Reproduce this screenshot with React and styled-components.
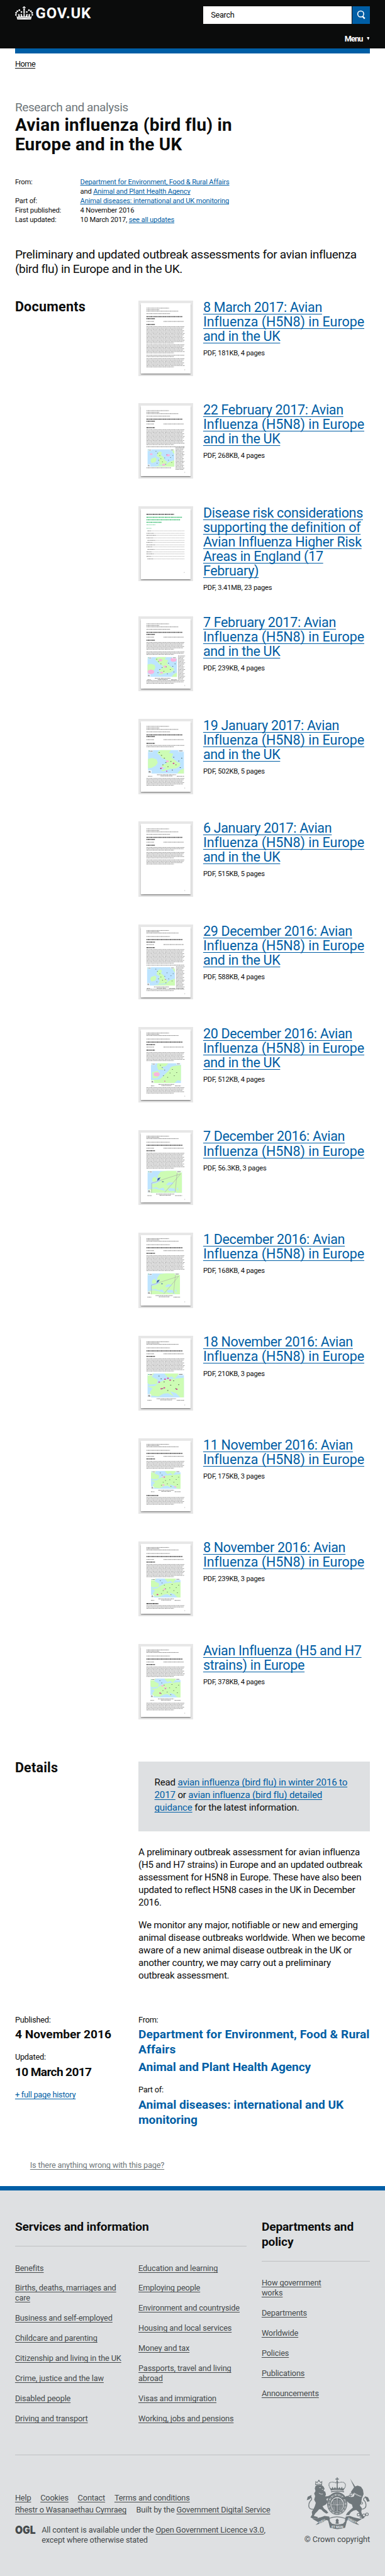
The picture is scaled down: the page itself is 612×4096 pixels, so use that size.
import React from 'react';
import styled, { createGlobalStyle, css } from 'styled-components';

/* The root font size makes 1rem equal to ten design pixels. */
const GlobalStyle = createGlobalStyle`
  html { font-size: 7.9735px; background: #dee0e2; }
  body { margin: 0; font-family: Roboto, "Liberation Sans", sans-serif; color: #0b0c0c; background: #fff; }
  *, *::before, *::after { box-sizing: border-box; }
  h1, h2, h3, p, ul, dl, dt, dd { margin: 0; padding: 0; font-weight: 400; }
  ul { list-style: none; }
`;

const blue = '#005ea5';

const gutter = css`
  padding-left: 3rem;
  padding-right: 3rem;
`;

const Link = styled.a`
  color: ${(p) => p.$color || blue};
  text-decoration: underline;
  text-decoration-thickness: 1px;
  text-decoration-skip-ink: none;
  text-underline-offset: 0.13em;
  white-space: nowrap;
`;

const PlainLink = styled(Link)`
  text-decoration: none;
`;

/* ---------- header ---------- */

const Header = styled.header`
  ${gutter}
  height: 9.7rem;
  background: #0b0c0c;
  color: #fff;
`;

const HeaderBar = styled.div`
  display: flex;
  justify-content: space-between;
  align-items: flex-start;
  padding-top: 1.2rem;
`;

const Brand = styled.a`
  display: flex;
  align-items: flex-start;
  gap: 0.5rem;
  color: #fff;
  font-size: 3rem;
  font-weight: 700;
  line-height: 2.8rem;
  letter-spacing: 0.105rem;
`;

const CrownMark = styled.svg`
  width: 3.6rem;
  height: 2.7rem;
`;

const SearchForm = styled.div`
  display: flex;
  gap: 0.1rem;
  height: 3.6rem;
`;

const SearchField = styled.div`
  width: 29.6rem;
  padding-left: 1.5rem;
  background: #fff;
  color: #0b0c0c;
  font-size: 1.6rem;
  line-height: 3.6rem;
  letter-spacing: -0.043rem;
`;

const SearchButton = styled.button`
  display: flex;
  align-items: center;
  justify-content: center;
  width: 3.5rem;
  padding: 0;
  border: 0;
  background: ${blue};
  svg { width: 2rem; height: 2.4rem; }
`;

const MenuToggle = styled.div`
  display: flex;
  justify-content: flex-end;
  align-items: center;
  gap: 0.75rem;
  padding-top: 1.95rem;
  padding-right: 0.1rem;
  font-size: 1.6rem;
  font-weight: 700;
  line-height: 2rem;
  letter-spacing: -0.11rem;
  svg { width: 0.6rem; height: 0.6rem; }
`;

/* ---------- page ---------- */

const Main = styled.main`
  ${gutter}
`;

const AccentBar = styled.div`
  height: 1rem;
  background: ${blue};
`;

const Breadcrumb = styled.nav`
  padding-top: 1.05rem;
  font-size: 1.6rem;
  line-height: 2rem;
  letter-spacing: -0.065rem;
`;

const Context = styled.p`
  margin-top: 6.15rem;
  color: #6f777b;
  font-size: 2.4rem;
  line-height: 3rem;
  letter-spacing: -0.06rem;
`;

const Title = styled.h1`
  margin-top: 0.1rem;
  font-size: 3.5rem;
  font-weight: 700;
  line-height: 3.9rem;
  letter-spacing: 0.031rem;
`;

const Metadata = styled.dl`
  display: grid;
  grid-template-columns: 13rem 1fr;
  margin-top: 4.55rem;
  font-size: 1.4rem;
  line-height: 1.9rem;
  letter-spacing: -0.02rem;
`;

const Lead = styled.p`
  margin-top: 4.38rem;
  font-size: 2.4rem;
  line-height: 3rem;
  letter-spacing: -0.045rem;
`;

const Section = styled.section`
  display: grid;
  grid-template-columns: 24.6rem 1fr;
  margin-top: ${(p) => p.$top}rem;
`;

const SectionTitle = styled.h2`
  font-size: 2.7rem;
  font-weight: 700;
  line-height: 2.5rem;
  letter-spacing: 0.028rem;
`;

const DocumentRow = styled.article`
  display: flex;
  align-items: flex-start;
  gap: 2rem;
  min-height: 20.5rem;
`;

const ThumbnailFrame = styled.div`
  flex: none;
  width: 10.9rem;
  height: 15rem;
  padding: 0.5rem;
  background: #e7e7e7;
`;

const ThumbnailPage = styled.svg`
  display: block;
  width: 9.9rem;
  height: 14rem;
  background: #fff;
  box-shadow: 0 0.2rem 0.2rem rgba(0, 0, 0, 0.4);
`;

const DocumentText = styled.div`
  padding-bottom: 4.58rem;
`;

const DocumentTitle = styled.h3`
  margin-top: -0.17rem;
  font-size: 2.7rem;
  line-height: 2.9rem;
`;

const TitleLine = styled.span`
  letter-spacing: ${(p) => (p.$wide ? -0.007 : -0.04)}rem;
`;

const FileInfo = styled.p`
  margin-top: 0.99rem;
  font-size: 1.4rem;
  line-height: 2rem;
  letter-spacing: -0.022rem;
`;

const Body = styled.div`
  font-size: 1.9rem;
  line-height: 2.5rem;
  letter-spacing: -0.03rem;
  white-space: nowrap;
  p + p { margin-top: 2rem; }
`;

const CallToAction = styled.div`
  height: 13.9rem;
  margin-bottom: 3rem;
  padding: 3rem 3.2rem;
  background: #dee0e2;
  letter-spacing: -0.023rem;
`;

const Fact = styled.div`
  & + & { margin-top: 2.07rem; }
`;

const FactLabel = styled.p`
  font-size: 1.6rem;
  line-height: 2rem;
  letter-spacing: -0.03rem;
`;

const FactValue = styled.p`
  margin-top: ${(p) => (p.$next ? 0.5 : 0.43)}rem;
  font-size: 2.4rem;
  font-weight: 700;
  line-height: 3rem;
  letter-spacing: ${(p) => p.$ls || 0}rem;
  white-space: nowrap;
`;

const HistoryLink = styled.p`
  margin-top: 2.07rem;
  font-size: 1.6rem;
  line-height: 2rem;
  letter-spacing: -0.03rem;
`;

const Feedback = styled.div`
  padding: 6.57rem 3rem 3.15rem;
  font-size: 1.6rem;
  line-height: 2rem;
  letter-spacing: -0.023rem;
`;

/* ---------- footer ---------- */

const Footer = styled.footer`
  ${gutter}
  min-height: 77.7rem;
  border-top: 1rem solid ${blue};
  background: #dee0e2;
  color: #454a4c;
  font-size: 1.6rem;
  line-height: 2rem;
  letter-spacing: -0.019rem;
`;

const FooterNav = styled.div`
  display: flex;
  justify-content: space-between;
  padding-top: 5.78rem;
`;

const FooterGroup = styled.div`
  width: ${(p) => p.$width}rem;
`;

const FooterHeading = styled.h2`
  padding-bottom: 2.22rem;
  border-bottom: 1px solid #bfc1c3;
  color: #0b0c0c;
  font-size: 2.4rem;
  font-weight: 700;
  line-height: 3rem;
  letter-spacing: -0.016rem;
`;

const FooterColumns = styled.div`
  display: grid;
  grid-template-columns: 24.6rem 1fr;
  padding-top: 3.37rem;
`;

const FooterList = styled.ul`
  display: flex;
  flex-direction: column;
  gap: 2rem;
`;

const FooterMeta = styled.div`
  display: flex;
  justify-content: space-between;
  margin-top: 6.15rem;
  border-top: 1px solid #bfc1c3;
`;

const MetaLinks = styled.div`
  padding-top: 7.57rem;
`;

const MetaRow = styled.div`
  display: flex;
  gap: ${(p) => p.$gap}rem;
  margin-bottom: 0.4rem;
  white-space: nowrap;
`;

const Licence = styled.div`
  display: flex;
  gap: 1.2rem;
  margin-top: 2rem;
  white-space: nowrap;
`;

const OglLogo = styled.svg`
  width: 4.1rem;
  height: 2rem;
  overflow: visible;
`;

const Copyright = styled.div`
  display: flex;
  flex-direction: column;
  align-items: flex-end;
  padding-top: 4.4rem;
  letter-spacing: -0.009rem;
  svg { width: 12.7rem; height: 10.4rem; margin-bottom: 1.05rem; }
`;

/* ---------- drawings ---------- */

const dotRing = [[35, 32], [23, 22], [12, 28], [5, 37], [4, 48], [65, 32], [77, 22], [88, 28], [95, 37], [96, 48]];

function Crown() {
  return (
    <CrownMark viewBox="0 0 100 76" fill="#fff">
      {dotRing.map(([x, y], i) => <circle key={i} cx={x} cy={y} r="4.8" />)}
      <circle cx="50" cy="20" r="5" />
      <path d="M46.500 0h7l-1.500 6 6-1.500v7l-6-1.500v8h-4v-8l-6 1.500v-7l6 1.500z" />
      <path d="M46 26h8v12h-8z" />
      <path d="M12 76 L7 54 l10 7 1-16 6 0 2 14 8-5 -3-9h7l1 9 7 5 1-16h6l1 16 7-5 1-9h7l-3 9 8 5 2-14h6l1 16 10-7-5 22z" />
      <path d="M14 67q36-6 72 0" stroke="#0b0c0c" strokeWidth="2" fill="none" />
      <path d="M29 46h9M29 50h9M62 46h9M62 50h9M45 42h10M15 46h9M76 46h9" stroke="#fff" strokeWidth="3" />
    </CrownMark>
  );
}

const dashes = ['3 .7 1.800 .6 2.400 .5', '2.200 .6 3.400 .5 1.400 .6', '4 .6 2 .6 2.600 .5 1.200 .7'];

function TextLines({ from, to, step = 2.7, x1 = 11, x2 = 87 }) {
  const count = Math.round((to - from) / step) + 1;
  return Array.from({ length: count }, (_, i) => {
    const last = i === count - 1 && x1 < 20;
    const end = last ? x1 + (x2 - x1) * 0.72 : x2 - ((i * 7) % 5);
    return (
      <line key={i} x1={x1} x2={end} y1={from + i * step} y2={from + i * step}
        stroke="#222" strokeWidth="1" strokeOpacity=".62" strokeDasharray={dashes[i % 3]} />
    );
  });
}

function Stroke({ y, x1 = 11, x2, bold, color = '#222' }) {
  return (
    <line x1={x1} x2={x2} y1={y} y2={y} stroke={color} strokeWidth={bold ? 1.9 : 1}
      strokeOpacity={bold ? 0.8 : 0.65} strokeDasharray={dashes[Math.round(y) % 3]} />
  );
}

const sea = '#bde4ff';
const land = '#cdfcb4';

const shores = {
  uk: [
    'M36 0H64L58 12 70 16 66 32 76 45 82 52 90 56 88 68 78 78 62 80 42 90 36 88 50 76 40 72 38 64 50 58 52 44 46 38 40 36 34 24 26 14 30 4Z',
    'M0 38 12 34 24 40 27 54 22 66 10 76 0 78Z',
    'M82 98 90 84 100 78V100H82Z',
  ],
  isles: [
    'M38 20 46 12 54 20 50 32 60 46 64 62 74 72 68 86 40 92 46 78 42 62 46 50 34 38Z',
    'M14 54 28 46 34 56 30 72 16 78 12 66Z',
    'M20 100 40 95 66 92 78 74 92 66 100 62V100Z',
    'M88 0H100V30L94 18Z',
  ],
  north: [
    'M22 0H58L50 14 34 20 46 32 24 34 20 16Z',
    'M4 46 22 38 30 54 22 74 6 76Z',
    'M0 84 28 82 36 72 46 56 60 36 66 20 76 14 100 10V88L88 86 78 100H0Z',
  ],
  europe: [
    'M30 22 38 4 58 0H100V100H84L78 80 66 78 58 84 66 96 50 88 46 76 34 82 26 74 14 78 12 60 26 56 40 44 30 36Z',
    'M14 34 22 26 28 40 24 50 14 48Z',
    'M4 84 20 80 52 92 80 92V100H4Z',
  ],
  central: [
    'M0 0 18 0 12 14 28 26 26 44 6 46 0 40Z',
    'M46 0H88L80 12 74 22 66 12 56 18Z',
    'M0 54 20 52 32 38 48 26 60 24 100 18V100H90L78 82 62 74 72 96 56 82 44 84 30 96 10 92 6 80 14 62Z',
  ],
};

const marks = [[30, 10], [36, 22], [44, 34], [70, 30], [62, 48], [76, 62], [54, 70], [40, 62], [84, 46], [88, 74], [66, 84], [48, 52], [34, 78], [92, 34]];

function MapFigure({ x, y, w, h, kind, hot = [], soft, busy, caption = true }) {
  return (
    <>
      <svg x={x} y={y} width={w} height={h} viewBox="0 0 100 100" preserveAspectRatio="none">
        <rect width="100" height="100" fill={sea} />
        {shores[kind].map((d) => <path key={d} d={d} fill={land} />)}
        {kind === 'europe' && <path d="M54 62 62 52 76 54 72 62 58 66ZM84 80 90 92 88 76Z" fill={sea} />}
        {soft && <path d="M12 100V56L96 14M96 14 50 98M86 6 80 96" stroke="#9b88a0" strokeWidth="1" fill="none" />}
        {hot.map(([a, b, r = 5], i) => <circle key={i} cx={a} cy={b} r={r} fill={r > 3 ? '#f9b4de' : '#d8369c'} />)}
        {soft && <path d="M30 34 38 30 34 40 28 46ZM42 48h5v3h-5z" fill="#3a5aa8" />}
        {!soft && marks.slice(0, busy ? 14 : 9).map(([a, b], i) => <rect key={i} x={a} y={b} width="3" height="2" fill="#2d3a2c" />)}
        <path d="M0 0H14V9H0ZM84 0H100V8H84ZM0 86H10V100H0Z" fill="#fff" fillOpacity=".9" />
        <path d="M2 3h3v3H2z" fill="#29a58a" />
        <path d="M6 5h7M86 4h10M2 91h5M2 95h6" stroke="#333" strokeWidth="1.400" />
      </svg>
      {caption && (
        <>
          <Stroke y={y + h + 2.5} x1={x + w * 0.25} x2={x + w * 0.78} />
          <Stroke y={y + h + 5} x1={x + w * 0.35} x2={x + w * 0.68} />
          <Stroke y={y + h + 5.5} x1={x} x2={x + w * 0.12} />
          <Stroke y={y + h + 5.5} x1={x + w * 0.8} x2={x + w} />
        </>
      )}
    </>
  );
}

function PageHead({ lines, sub, title, date, report }) {
  return (
    <>
      <Stroke y={lines[0]} x2={56} />
      <Stroke y={lines[1]} x2={37} />
      <Stroke y={lines[2]} x2={75} />
      <Stroke y={sub} x2={58} />
      <Stroke y={title[0]} x2={83} bold />
      {title[1] && <Stroke y={title[1]} x2={28} bold />}
      <Stroke y={date} x2={26} />
      <Stroke y={date} x1={45} x2={85} />
      <Stroke y={report} x2={28} bold />
      <Stroke y={133} x1={87} x2={88} />
    </>
  );
}

const headA = { lines: [10, 13.3, 16], sub: 21, title: [27, 31], date: 36.5, report: 42.5 };
const headB = { lines: [7, 9.5, 12], sub: 19, title: [25, 30], date: 35, report: 41 };
const headC = { lines: [7, 9.5, 12], sub: 19, title: [25], date: 31, report: 36 };

const thumbnails = {
  march: (
    <><PageHead {...headA} /><TextLines from={47} to={79} /><TextLines from={83} to={100} /><TextLines from={104} to={107} /><TextLines from={111} to={127} /></>
  ),
  feb22: (
    <><PageHead {...headA} report={44} /><TextLines from={48} to={78} /><Stroke y={82} x2={87} /><MapFigure x={13} y={87} w={54} h={35} kind="isles" busy hot={[[76, 34, 7], [14, 28], [60, 88, 6]]} caption={false} /><Stroke y={124} x2={60} /><TextLines from={84} to={128} x1={69} x2={87} /></>
  ),
  risk: (
    <>
      <Stroke y={11} x2={66} bold />
      <Stroke y={17} x2={82} bold color="#1ab25a" /><Stroke y={22} x2={78} bold color="#1ab25a" /><Stroke y={27} x2={41} bold color="#1ab25a" />
      <Stroke y={32} x2={29} color="#1ab25a" /><Stroke y={39} x2={21} color="#1ab25a" />
      {[44, 49, 53, 58, 63, 67, 72, 76, 81, 86, 90, 95, 100].map((y, i) => (
        <g key={y}>
          <Stroke y={y} x1={i % 4 === 0 ? 13 : 11} x2={20 + ((i * 5) % 11)} />
          <line x1={20 + ((i * 5) % 11)} x2="87" y1={y} y2={y} stroke="#444" strokeOpacity=".6" strokeWidth=".7" strokeDasharray=".8 .3" />
        </g>
      ))}
      <Stroke y={127} x1={86} x2={87} />
    </>
  ),
  feb7: (
    <><PageHead {...headA} /><TextLines from={47} to={60} /><TextLines from={66} to={71} step={2.5} /><MapFigure x={13} y={76} w={59} h={40} kind="uk" busy hot={[[12, 74, 11], [88, 14, 10], [44, 16, 6], [60, 48], [48, 78]]} /><TextLines from={74} to={120} x1={74} x2={88} /><TextLines from={123} to={129} /></>
  ),
  jan19: (
    <><PageHead {...headA} title={[27, 30.5]} report={44} /><TextLines from={48} to={51} /><MapFigure x={14} y={57} w={72} h={47} kind="uk" busy hot={[[54, 48, 4], [38, 76, 4], [71, 57, 2.5], [36, 78, 2], [52, 90, 2]]} /><TextLines from={114} to={128} /></>
  ),
  jan6: (
    <><PageHead {...headA} /><TextLines from={47} to={52} /><TextLines from={57} to={68} /><TextLines from={72} to={80} /></>
  ),
  dec29: (
    <><PageHead {...headB} /><TextLines from={45} to={72} /><Stroke y={76} x2={86} /><MapFigure x={12} y={80} w={56} h={37} kind="isles" busy hot={[[66, 66, 2]]} /><TextLines from={79} to={121} x1={70} x2={87} /><TextLines from={124} to={127} /></>
  ),
  dec20: (
    <><PageHead {...headB} /><TextLines from={46} to={62} /><MapFigure x={20} y={67} w={60} h={40} kind="north" hot={[[19, 56, 10], [46, 90, 2]]} /><TextLines from={116} to={127} /></>
  ),
  dec7: (
    <><PageHead {...headC} /><TextLines from={41} to={70} /><MapFigure x={13} y={76} w={69} h={44} kind="europe" soft /></>
  ),
  dec1: (
    <><PageHead {...headC} /><TextLines from={41} to={71} /><MapFigure x={13} y={76} w={65} h={42} kind="europe" soft /></>
  ),
  nov18: (
    <><PageHead {...headC} /><TextLines from={41} to={65} /><MapFigure x={13} y={70} w={73} h={48} kind="central" hot={[[32, 36, 2.5], [48, 24, 2.5], [56, 20, 2.5], [38, 64, 2.5], [46, 60, 2.5], [62, 28, 2.5], [80, 66, 2.5]]} /></>
  ),
  nov11: (
    <><PageHead {...headC} /><TextLines from={41} to={55} /><MapFigure x={20} y={60} w={59} h={36} kind="central" busy hot={[[44, 34, 5], [42, 78, 4], [82, 88, 4]]} /><Stroke y={109} x2={35} bold /><TextLines from={113} to={127} /></>
  ),
  nov8: (
    <><PageHead {...headC} /><TextLines from={41} to={65} /><MapFigure x={20} y={69} w={59} h={38} kind="central" busy hot={[[46, 56, 4], [22, 84, 3]]} /><Stroke y={119} x2={35} bold /><TextLines from={123} to={129} /></>
  ),
  strains: (
    <><PageHead {...headC} /><TextLines from={41} to={60} /><MapFigure x={19} y={64} w={60} h={38} kind="central" busy hot={[[40, 38, 4], [50, 50, 4], [32, 76, 3]]} /><TextLines from={113} to={127} /></>
  ),
};

function RoyalArms() {
  return (
    <svg viewBox="20 16 378 310" fill="#6f777b">
      {/* crown */}
      <g stroke="#6f777b" fill="none" strokeWidth="5">
        <path d="M168 92Q146 62 158 50T202 52Q236 38 248 52T238 92" strokeDasharray="6 3" />
        <path d="M203 40V92" strokeWidth="6" />
      </g>
      <path d="M199 18h8l-2 7 7-2v8l-7-2v10h-5V29l-7 2v-8l7 2z" />
      <circle cx="203" cy="44" r="6" />
      <path d="M166 96 161 80l9 4 5-12 7 12 8-10 6 10 7-14 7 14 6-10 8 10 7-12 5 12 9-4-5 16q-40-10-79 0z" />
      <path d="M166 100q38-10 78 0v6q-40-10-78 0z" />
      {/* garter and shield */}
      <path fillRule="evenodd" d="M203 104a60 68 0 1 1-.1 0zM203 134a40 44 0 1 0 .1 0z" />
      <ellipse cx="203" cy="180" rx="36" ry="41" />
      <path d="M203 139v82M167 180h72" stroke="#dee0e2" strokeWidth="3" />
      <path d="M174 156h22M176 164h20M176 171h20M212 156h20M212 164h22M212 171h22M174 190v18M181 190v22M188 190v24M212 192h22M212 200h20M212 208h14" stroke="#dee0e2" strokeWidth="2.500" strokeDasharray="7 2 4 2" />
      <ellipse cx="203" cy="176" rx="50" ry="56" fill="none" stroke="#dee0e2" strokeWidth="11" strokeDasharray="3 4 2 5 5 3" opacity=".85" />
      {/* lion */}
      <path d="M74 68 82 62 110 62 122 72 128 84 122 96 132 102 136 118 132 130 150 128 160 122 158 136 138 146 146 162 138 176 128 182 116 188 124 202 142 216 150 228 138 232 122 222 108 208 96 206 84 220 72 232 64 246 88 252 84 262 58 262 44 254 54 238 52 222 62 206 70 188 76 168 66 150 72 128 66 112 74 98 70 82Z" />
      <path d="M74 60 76 42 84 48 94 34 104 48 112 42 111 60Q92 54 74 60Z" fill="none" stroke="#6f777b" strokeWidth="4" />
      <circle cx="94" cy="36" r="4" />
      <path d="M64 206Q34 208 34 186T50 150Q56 132 36 134" fill="none" stroke="#6f777b" strokeWidth="5" />
      <path d="M22 152 28 132 50 122 48 138 36 148Z" />
      <path d="M96 78h10M112 88h8M94 110q14 10 24 6" stroke="#dee0e2" strokeWidth="3" fill="none" />
      {/* unicorn */}
      <path d="M280 24 312 74 304 78Z" />
      <path d="M306 72 324 66 344 72 356 90 360 116 350 140 346 164 338 184 350 200 346 222 352 240 366 256 352 264 340 244 330 222 316 210 300 214 284 224 274 240 254 242 262 228 276 214 296 196 290 178 274 170 250 148 234 146 232 136 252 132 262 126 282 134 300 132 308 116 290 112 284 104 296 86Z" />
      <path d="M302 110 328 124 346 130" stroke="#dee0e2" strokeWidth="6" fill="none" strokeDasharray="6 3" />
      <path d="M350 206Q376 202 374 180T360 152Q356 134 380 136" fill="none" stroke="#6f777b" strokeWidth="5" />
      <path d="M366 128 386 136 396 158 382 162 374 146Z" />
      <g fill="none" stroke="#6f777b" strokeWidth="4">
        <circle cx="286" cy="118" r="7" /><circle cx="276" cy="130" r="6" /><circle cx="348" cy="170" r="6" /><circle cx="330" cy="238" r="8" />
        <circle cx="362" cy="242" r="8" /><circle cx="380" cy="236" r="8" /><circle cx="346" cy="252" r="7" />
      </g>
      {/* motto scroll */}
      <path d="M56 264Q84 262 128 246L156 250 160 276 138 270Q112 290 74 300L92 284Z" />
      <path d="M350 264Q322 262 278 246L254 250 248 276 270 270Q296 290 334 300L316 284Z" />
      <path d="M146 262 172 292Q204 302 238 292L264 262 250 316Q204 332 160 316Z" />
      <path d="M203 262q14 8 6 20l6 8-12 4-12-4 6-8q-8-12 6-20z" />
      <path d="M152 262Q200 240 254 262" fill="none" stroke="#6f777b" strokeWidth="4" />
      <g fill="#dee0e2" fontSize="19" fontWeight="700" textAnchor="middle" letterSpacing="0">
        <text transform="translate(116 284) rotate(-27)">DIEU</text>
        <text x="204" y="318">ET MON</text>
        <text transform="translate(288 280) rotate(27)">DROIT</text>
      </g>
    </svg>
  );
}

/* ---------- data ---------- */

const uk = ['Influenza (H5N8) in Europe', 'and in the UK'];
const europe = ['Influenza (H5N8) in Europe'];

const documents = [
  { art: 'march', lines: ['8 March 2017: Avian', ...uk], info: 'PDF, 181KB, 4 pages' },
  { art: 'feb22', lines: ['22 February 2017: Avian', ...uk], info: 'PDF, 268KB, 4 pages' },
  { art: 'risk', lines: ['Disease risk considerations', 'supporting the definition of', 'Avian Influenza Higher Risk', 'Areas in England (17', 'February)'], info: 'PDF, 3.41MB, 23 pages' },
  { art: 'feb7', lines: ['7 February 2017: Avian', ...uk], info: 'PDF, 239KB, 4 pages' },
  { art: 'jan19', lines: ['19 January 2017: Avian', ...uk], info: 'PDF, 502KB, 5 pages' },
  { art: 'jan6', lines: ['6 January 2017: Avian', ...uk], info: 'PDF, 515KB, 5 pages' },
  { art: 'dec29', lines: ['29 December 2016: Avian', ...uk], info: 'PDF, 588KB, 4 pages' },
  { art: 'dec20', lines: ['20 December 2016: Avian', ...uk], info: 'PDF, 512KB, 4 pages' },
  { art: 'dec7', lines: ['7 December 2016: Avian', ...europe], info: 'PDF, 56.3KB, 3 pages' },
  { art: 'dec1', lines: ['1 December 2016: Avian', ...europe], info: 'PDF, 168KB, 4 pages' },
  { art: 'nov18', lines: ['18 November 2016: Avian', ...europe], info: 'PDF, 210KB, 3 pages' },
  { art: 'nov11', lines: ['11 November 2016: Avian', ...europe], info: 'PDF, 175KB, 3 pages' },
  { art: 'nov8', lines: ['8 November 2016: Avian', ...europe], info: 'PDF, 239KB, 3 pages' },
  { art: 'strains', lines: ['Avian Influenza (H5 and H7', 'strains) in Europe'], info: 'PDF, 378KB, 4 pages' },
];

const services = [
  [['Benefits'], ['Births, deaths, marriages and', 'care'], ['Business and self-employed'], ['Childcare and parenting'], ['Citizenship and living in the UK'], ['Crime, justice and the law'], ['Disabled people'], ['Driving and transport']],
  [['Education and learning'], ['Employing people'], ['Environment and countryside'], ['Housing and local services'], ['Money and tax'], ['Passports, travel and living', 'abroad'], ['Visas and immigration'], ['Working, jobs and pensions']],
];
const departments = [['How government', 'works'], ['Departments'], ['Worldwide'], ['Policies'], ['Publications'], ['Announcements']];

const grey = '#454a4c';

function Lines({ lines }) {
  return lines.map((line, i) => (
    <React.Fragment key={line}>{i > 0 && <br />}{line}</React.Fragment>
  ));
}

function LinkList({ items }) {
  return (
    <FooterList>
      {items.map((lines) => (
        <li key={lines[0]}><Link $color={grey}><Lines lines={lines} /></Link></li>
      ))}
    </FooterList>
  );
}

function DocumentItem({ art, lines, info }) {
  return (
    <DocumentRow>
      <ThumbnailFrame><ThumbnailPage viewBox="0 0 99 140">{thumbnails[art]}</ThumbnailPage></ThumbnailFrame>
      <DocumentText>
        <DocumentTitle>
          <Link>
            {lines.map((line, i) => (
              <React.Fragment key={line}>
                {i > 0 && <br />}
                <TitleLine $wide={line.includes('H5N8')}>{line}</TitleLine>
              </React.Fragment>
            ))}
          </Link>
        </DocumentTitle>
        <FileInfo>{info}</FileInfo>
      </DocumentText>
    </DocumentRow>
  );
}

export default function App() {
  return (
    <>
      <GlobalStyle />
      <Header>
        <HeaderBar>
          <Brand><Crown />GOV.UK</Brand>
          <SearchForm>
            <SearchField>Search</SearchField>
            <SearchButton aria-label="Search">
              <svg viewBox="0 0 20 24" fill="none" stroke="#fff">
                <circle cx="9.300" cy="10.300" r="6" strokeWidth="2" />
                <path d="M13 15l4.300 4.600" strokeWidth="3" />
              </svg>
            </SearchButton>
          </SearchForm>
        </HeaderBar>
        <MenuToggle>
          Menu
          <svg viewBox="0 0 6 6" fill="#fff"><path d="M0 0h6L3 6z" /></svg>
        </MenuToggle>
      </Header>

      <Main>
        <AccentBar />
        <Breadcrumb><Link $color="#0b0c0c">Home</Link></Breadcrumb>
        <Context>Research and analysis</Context>
        <Title>Avian influenza (bird flu) in<br />Europe and in the UK</Title>

        <Metadata>
          <dt>From:</dt>
          <dd>
            <Link>Department for Environment, Food &amp; Rural Affairs</Link><br />
            and <Link>Animal and Plant Health Agency</Link>
          </dd>
          <dt>Part of:</dt>
          <dd><Link>Animal diseases: international and UK monitoring</Link></dd>
          <dt>First published:</dt>
          <dd>4 November 2016</dd>
          <dt>Last updated:</dt>
          <dd>10 March 2017, <Link>see all updates</Link></dd>
        </Metadata>

        <Lead>
          Preliminary and updated outbreak assessments for avian influenza<br />
          (bird flu) in Europe and in the UK.
        </Lead>

        <Section $top={4.72}>
          <SectionTitle>Documents</SectionTitle>
          <div>{documents.map((doc) => <DocumentItem key={doc.art} {...doc} />)}</div>
        </Section>

        <Section $top={3}>
          <SectionTitle>Details</SectionTitle>
          <Body>
            <CallToAction>
              Read <Link>avian influenza (bird flu) in winter 2016 to<br />2017</Link> or{' '}
              <Link>avian influenza (bird flu) detailed<br />guidance</Link> for the latest information.
            </CallToAction>
            <p>
              A preliminary outbreak assessment for avian influenza<br />
              (H5 and H7 strains) in Europe and an updated outbreak<br />
              assessment for H5N8 in Europe. These have also been<br />
              updated to reflect H5N8 cases in the UK in December<br />
              2016.
            </p>
            <p>
              We monitor any major, notifiable or new and emerging<br />
              animal disease outbreaks worldwide. When we become<br />
              aware of a new animal disease outbreak in the UK or<br />
              another country, we may carry out a preliminary<br />
              outbreak assessment.
            </p>
          </Body>
        </Section>

        <Section $top={6.55}>
          <div>
            <Fact><FactLabel>Published:</FactLabel><FactValue>4 November 2016</FactValue></Fact>
            <Fact><FactLabel>Updated:</FactLabel><FactValue $ls={-0.08}>10 March 2017</FactValue></Fact>
            <HistoryLink><Link>+ full page history</Link></HistoryLink>
          </div>
          <div>
            <Fact>
              <FactLabel>From:</FactLabel>
              <FactValue $ls={0.012}><PlainLink>Department for Environment, Food &amp; Rural<br />Affairs</PlainLink></FactValue>
              <FactValue $next $ls={-0.01}><PlainLink>Animal and Plant Health Agency</PlainLink></FactValue>
            </Fact>
            <Fact>
              <FactLabel>Part of:</FactLabel>
              <FactValue><PlainLink>Animal diseases: international and UK<br />monitoring</PlainLink></FactValue>
            </Fact>
          </div>
        </Section>
        <Feedback><Link $color="#6f777b">Is there anything wrong with this page?</Link></Feedback>
      </Main>

      <Footer>
        <FooterNav>
          <FooterGroup $width={46.2}>
            <FooterHeading>Services and information</FooterHeading>
            <FooterColumns>
              {services.map((items) => <LinkList key={items[0][0]} items={items} />)}
            </FooterColumns>
          </FooterGroup>
          <FooterGroup $width={21.6}>
            <FooterHeading>Departments and<br />policy</FooterHeading>
            <FooterColumns><LinkList items={departments} /></FooterColumns>
          </FooterGroup>
        </FooterNav>

        <FooterMeta>
          <MetaLinks>
            <MetaRow $gap={1.85}>
              <Link $color={grey}>Help</Link>
              <Link $color={grey}>Cookies</Link>
              <Link $color={grey}>Contact</Link>
              <Link $color={grey}>Terms and conditions</Link>
            </MetaRow>
            <MetaRow $gap={1.95}>
              <Link $color={grey}>Rhestr o Wasanaethau Cymraeg</Link>
              <span>Built by the <Link $color={grey}>Government Digital Service</Link></span>
            </MetaRow>
            <Licence>
              <OglLogo viewBox="0 0 41 20">
                <text x="0" y="17" fontFamily="Inter, sans-serif" fontSize="22" fontWeight="900" letterSpacing="0" fill={grey} textLength="41" lengthAdjust="spacingAndGlyphs">OGL</text>
              </OglLogo>
              <span>
                All content is available under the <Link $color={grey}>Open Government Licence v3.0</Link>,<br />
                except where otherwise stated
              </span>
            </Licence>
          </MetaLinks>
          <Copyright>
            <RoyalArms />
            © Crown copyright
          </Copyright>
        </FooterMeta>
      </Footer>
    </>
  );
}
